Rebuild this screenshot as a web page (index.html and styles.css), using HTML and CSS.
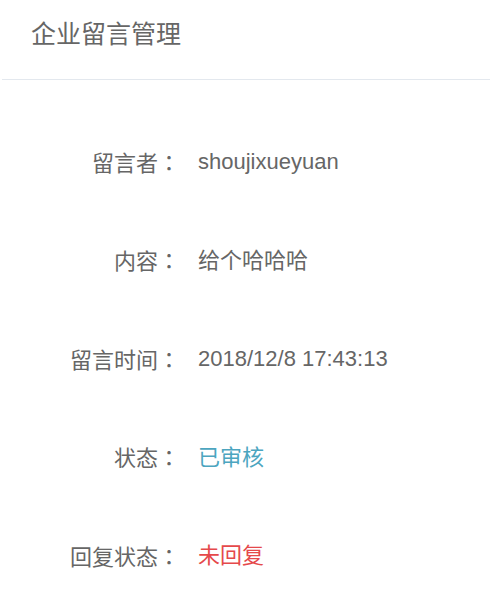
FILE: index.html
```html
<!DOCTYPE html>
<html lang="zh-CN">
<head>
    <meta charset="UTF-8">
    <meta name="viewport" content="width=device-width, initial-scale=1.0">
    <title>企业留言管理</title>
    <link rel="stylesheet" href="styles.css">
</head>
<body>
    <div class="header">
        <h1 class="title">企业留言管理</h1>
    </div>

    <div class="detail">
        <div class="row">
            <span class="label">留言者<i class="colon" lang="zh-TW">：</i></span>
            <span class="value">shoujixueyuan</span>
        </div>
        <div class="row">
            <span class="label">内容<i class="colon" lang="zh-TW">：</i></span>
            <span class="value">给个哈哈哈</span>
        </div>
        <div class="row">
            <span class="label">留言时间<i class="colon" lang="zh-TW">：</i></span>
            <span class="value">2018/12/8 17:43:13</span>
        </div>
        <div class="row">
            <span class="label">状态<i class="colon" lang="zh-TW">：</i></span>
            <span class="value status-ok">已审核</span>
        </div>
        <div class="row">
            <span class="label">回复状态<i class="colon" lang="zh-TW">：</i></span>
            <span class="value status-no">未回复</span>
        </div>
    </div>
</body>
</html>
```

FILE: styles.css
```css
* {
    margin: 0;
    padding: 0;
    box-sizing: border-box;
}

body {
    font-family: Arial, "Liberation Sans", "Noto Sans CJK SC", sans-serif;
    background: #fff;
    color: #666;
}

.header {
    height: 80px;
    margin: 0 2px;
    padding: 0 29px 10px;
    display: flex;
    align-items: center;
    border-bottom: 1px solid #e3e8ee;
}

.title {
    font-size: 25px;
    font-weight: normal;
    color: #666;
    line-height: 1;
}

.detail {
    padding-top: 33px;
}

.row {
    display: flex;
    align-items: center;
    height: 98.5px;
    font-size: 22px;
    line-height: 1;
}

.label {
    width: 180px;
    text-align: right;
    flex-shrink: 0;
}

/* full-width colon, centered in its cell */
.colon {
    font-style: normal;
    font-family: "Noto Sans CJK TC", "Noto Sans CJK SC", sans-serif;
}

.value {
    margin-left: 18px;
}

.status-ok {
    color: #4ca5bf;
}

.status-no {
    color: #e5494b;
}
```
